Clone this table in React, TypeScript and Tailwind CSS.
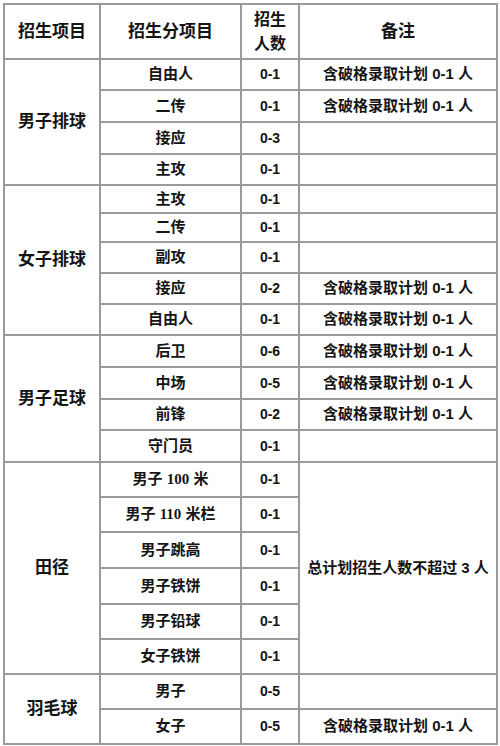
import React from 'react';

type Row = { sub: React.ReactNode; num: string; note?: string; h: number };
type Group = { name: string; rows: Row[]; mergedNote?: string };

const NOTE = '含破格录取计划 0-1 人';

const groups: Group[] = [
  {
    name: '男子排球',
    rows: [
      { sub: '自由人', num: '0-1', note: NOTE, h: 31 },
      { sub: '二传', num: '0-1', note: NOTE, h: 32 },
      { sub: '接应', num: '0-3', h: 32 },
      { sub: '主攻', num: '0-1', h: 31 },
    ],
  },
  {
    name: '女子排球',
    rows: [
      { sub: '主攻', num: '0-1', h: 28 },
      { sub: '二传', num: '0-1', h: 29 },
      { sub: '副攻', num: '0-1', h: 31 },
      { sub: '接应', num: '0-2', note: NOTE, h: 31 },
      { sub: '自由人', num: '0-1', note: NOTE, h: 31 },
    ],
  },
  {
    name: '男子足球',
    rows: [
      { sub: '后卫', num: '0-6', note: NOTE, h: 32 },
      { sub: '中场', num: '0-5', note: NOTE, h: 32 },
      { sub: '前锋', num: '0-2', note: NOTE, h: 31 },
      { sub: '守门员', num: '0-1', h: 32 },
    ],
  },
  {
    name: '田径',
    mergedNote: '总计划招生人数不超过 3 人',
    rows: [
      {
        sub: (
          <>
            男子 <span className="font-['Liberation_Serif',serif] font-bold">100</span> 米
          </>
        ),
        num: '0-1',
        h: 35,
      },
      {
        sub: (
          <>
            男子 <span className="font-['Liberation_Serif',serif] font-bold">110</span> 米栏
          </>
        ),
        num: '0-1',
        h: 35,
      },
      { sub: '男子跳高', num: '0-1', h: 36 },
      { sub: '男子铁饼', num: '0-1', h: 36 },
      { sub: '男子铅球', num: '0-1', h: 35 },
      { sub: '女子铁饼', num: '0-1', h: 35 },
    ],
  },
  {
    name: '羽毛球',
    rows: [
      { sub: '男子', num: '0-5', h: 35 },
      { sub: '女子', num: '0-5', note: NOTE, h: 35 },
    ],
  },
];

const cell = 'border-2 border-[#9a9a9a] text-center align-middle p-0';

export default function App() {
  return (
    <div className="w-[500px] h-[746px] bg-white pt-[3px] pl-[3px] font-['Liberation_Sans','Noto_Sans_CJK_SC',sans-serif] text-[#141414]">
      <table className="border-collapse table-fixed w-[493px]">
        <colgroup>
          <col className="w-[96px]" />
          <col className="w-[141px]" />
          <col className="w-[58px]" />
          <col className="w-[198px]" />
        </colgroup>
        <thead>
          <tr className="h-[55px]">
            <th className={`${cell} text-[17px] font-bold`}>招生项目</th>
            <th className={`${cell} text-[17px] font-bold`}>招生分项目</th>
            <th className={`${cell} text-[16px] font-bold leading-[24px]`}>
              招生
              <br />
              人数
            </th>
            <th className={`${cell} text-[17px] font-bold`}>备注</th>
          </tr>
        </thead>
        <tbody>
          {groups.map((g) =>
            g.rows.map((r, i) => (
              <tr key={g.name + i} style={{ height: r.h }}>
                {i === 0 && (
                  <td rowSpan={g.rows.length} className={`${cell} text-[17px] font-bold`}>
                    {g.name}
                  </td>
                )}
                <td className={`${cell} text-[15px] font-semibold`}>{r.sub}</td>
                <td className={`${cell} text-[14px] font-bold`}>{r.num}</td>
                {g.mergedNote ? (
                  i === 0 && (
                    <td rowSpan={g.rows.length} className={`${cell} text-[15px] font-semibold`}>
                      {g.mergedNote}
                    </td>
                  )
                ) : (
                  <td className={`${cell} text-[15px] font-semibold`}>{r.note ?? ''}</td>
                )}
              </tr>
            ))
          )}
        </tbody>
      </table>
    </div>
  );
}
